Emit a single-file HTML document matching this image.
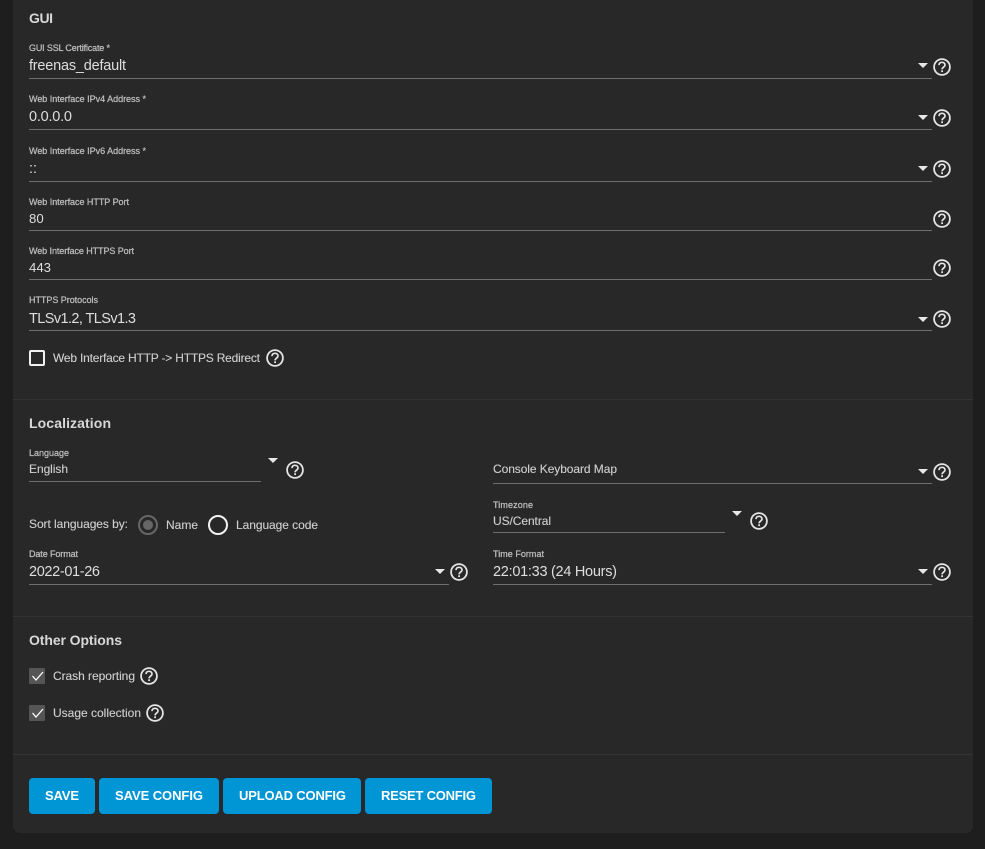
<!DOCTYPE html>
<html><head><meta charset="utf-8"><style>
html,body{margin:0;padding:0;background:#1e1e1e;width:985px;height:849px;overflow:hidden}
svg{display:block}
text{font-family:"Liberation Sans",sans-serif}
.l{font-size:9px;fill:#bdbdbd;stroke:#bdbdbd;stroke-width:.25}
.v{font-size:14.5px;fill:#dedede}
.n{font-size:13.2px;fill:#dedede}
.s{font-size:12px;fill:#cfcfcf;stroke:#cfcfcf;stroke-width:.12}
.t{font-size:14px;font-weight:bold;fill:#d8d8d8}
.b{font-size:13px;font-weight:bold;fill:#fff}
.ln{stroke:#6f6f6f;stroke-width:1}
.dv{stroke:#333;stroke-width:1}
.btn{fill:#0095d5}
</style></head><body>
<svg width="985" height="849" viewBox="0 0 985 849" xmlns="http://www.w3.org/2000/svg">
<defs>
<g id="h"><circle cx="0" cy="0" r="7.9" fill="none" stroke="#e4e4e4" stroke-width="1.8"/><path d="M-3-1.9C-3-3.7-1.7-4.7 0-4.7S3-3.7 3-2C3 0 .1 .1 .1 2.4" fill="none" stroke="#e4e4e4" stroke-width="1.7"/><rect x="-.8" y="3.3" width="1.8" height="1.8" fill="#e4e4e4"/></g>
<path id="c" d="M0 0h10l-5 5z" fill="#e8e8e8"/>
<path id="k" d="M3.5 8l3.5 4 7-8" fill="none" stroke="#fff" stroke-width="1.3"/>
</defs>
<rect x="13" y="-20" width="960" height="853" rx="7" fill="#282828"/>

<text class="t" x="29" y="23" textLength="24" lengthAdjust="spacing">GUI</text>

<text class="l" x="29" y="51" textLength="81" lengthAdjust="spacing">GUI SSL Certificate *</text>
<text class="v" x="29" y="70" textLength="97" lengthAdjust="spacing">freenas_default</text>
<line class="ln" x1="29" x2="932" y1="78.5" y2="78.5"/>
<use href="#c" x="918" y="63"/><use href="#h" x="942" y="67"/>

<text class="l" x="29" y="102" textLength="117" lengthAdjust="spacing">Web Interface IPv4 Address *</text>
<text class="v" x="29" y="121" textLength="43" lengthAdjust="spacing">0.0.0.0</text>
<line class="ln" x1="29" x2="932" y1="129.5" y2="129.5"/>
<use href="#c" x="918" y="115"/><use href="#h" x="942" y="118"/>

<text class="l" x="29" y="154" textLength="117" lengthAdjust="spacing">Web Interface IPv6 Address *</text>
<text class="v" x="29" y="173">::</text>
<line class="ln" x1="29" x2="932" y1="181.5" y2="181.5"/>
<use href="#c" x="918" y="166"/><use href="#h" x="942" y="169"/>

<text class="l" x="29" y="205" textLength="100" lengthAdjust="spacing">Web Interface HTTP Port</text>
<text class="n" x="29" y="223">80</text>
<line class="ln" x1="29" x2="932" y1="230.5" y2="230.5"/>
<use href="#h" x="942" y="219"/>

<text class="l" x="29" y="254" textLength="105" lengthAdjust="spacing">Web Interface HTTPS Port</text>
<text class="n" x="29" y="272">443</text>
<line class="ln" x1="29" x2="932" y1="279.5" y2="279.5"/>
<use href="#h" x="942" y="268"/>

<text class="l" x="29" y="303" textLength="69" lengthAdjust="spacing">HTTPS Protocols</text>
<text class="v" x="29" y="323" textLength="107" lengthAdjust="spacing">TLSv1.2, TLSv1.3</text>
<line class="ln" x1="29" x2="932" y1="330.5" y2="330.5"/>
<use href="#c" x="918" y="317"/><use href="#h" x="942" y="319"/>

<rect x="30" y="351" width="14" height="14" rx="1" fill="none" stroke="#f2f2f2" stroke-width="2"/>
<text class="s" x="53" y="362" textLength="207" lengthAdjust="spacing">Web Interface HTTP -&gt; HTTPS Redirect</text>
<use href="#h" x="275" y="358"/>

<line class="dv" x1="13" x2="973" y1="399.5" y2="399.5"/>

<text class="t" x="29" y="428" textLength="82" lengthAdjust="spacing">Localization</text>

<text class="l" x="29" y="456" textLength="40" lengthAdjust="spacing">Language</text>
<text class="s" x="29" y="473" textLength="39" lengthAdjust="spacing">English</text>
<line class="ln" x1="29" x2="261" y1="481.5" y2="481.5"/>
<use href="#c" x="268" y="458"/><use href="#h" x="295" y="470"/>

<text class="s" x="29" y="528" textLength="99" lengthAdjust="spacing">Sort languages by:</text>
<circle cx="148" cy="525" r="9" fill="none" stroke="#666" stroke-width="2"/>
<circle cx="148" cy="525" r="5" fill="#666"/>
<text class="s" x="166" y="529" textLength="32" lengthAdjust="spacing">Name</text>
<circle cx="218" cy="525" r="9" fill="none" stroke="#f2f2f2" stroke-width="2"/>
<text class="s" x="236" y="529" textLength="82" lengthAdjust="spacing">Language code</text>

<text class="s" x="493" y="473" textLength="124" lengthAdjust="spacing">Console Keyboard Map</text>
<line class="ln" x1="493" x2="932" y1="483.5" y2="483.5"/>
<use href="#c" x="918" y="469"/><use href="#h" x="942" y="472"/>

<text class="l" x="493" y="508" textLength="40" lengthAdjust="spacing">Timezone</text>
<text class="s" x="493" y="525" textLength="58" lengthAdjust="spacing">US/Central</text>
<line class="ln" x1="493" x2="725" y1="532.5" y2="532.5"/>
<use href="#c" x="732" y="511"/><use href="#h" x="759" y="521"/>

<text class="l" x="29" y="557" textLength="49" lengthAdjust="spacing">Date Format</text>
<text class="v" x="29" y="576" textLength="71" lengthAdjust="spacing">2022-01-26</text>
<line class="ln" x1="29" x2="449" y1="584.5" y2="584.5"/>
<use href="#c" x="435" y="569"/><use href="#h" x="459" y="572"/>

<text class="l" x="493" y="557" textLength="51" lengthAdjust="spacing">Time Format</text>
<text class="v" x="493" y="576" textLength="124" lengthAdjust="spacing">22:01:33 (24 Hours)</text>
<line class="ln" x1="493" x2="932" y1="584.5" y2="584.5"/>
<use href="#c" x="918" y="569"/><use href="#h" x="942" y="572"/>

<line class="dv" x1="13" x2="973" y1="616.5" y2="616.5"/>

<text class="t" x="29" y="645" textLength="93" lengthAdjust="spacing">Other Options</text>

<rect x="29" y="668" width="16" height="16" rx="1" fill="#555"/>
<use href="#k" x="29" y="668"/>
<text class="s" x="53" y="680" textLength="82" lengthAdjust="spacing">Crash reporting</text>
<use href="#h" x="149" y="676"/>

<rect x="29" y="705" width="16" height="16" rx="1" fill="#555"/>
<use href="#k" x="29" y="705"/>
<text class="s" x="53" y="717" textLength="88" lengthAdjust="spacing">Usage collection</text>
<use href="#h" x="155" y="713"/>

<line class="dv" x1="13" x2="973" y1="754.5" y2="754.5"/>

<rect class="btn" x="29" y="778" width="66" height="36" rx="4"/>
<text class="b" x="45" y="800" textLength="34" lengthAdjust="spacing">SAVE</text>
<rect class="btn" x="99" y="778" width="120" height="36" rx="4"/>
<text class="b" x="115" y="800" textLength="88" lengthAdjust="spacing">SAVE CONFIG</text>
<rect class="btn" x="223" y="778" width="138" height="36" rx="4"/>
<text class="b" x="239" y="800" textLength="107" lengthAdjust="spacing">UPLOAD CONFIG</text>
<rect class="btn" x="365" y="778" width="127" height="36" rx="4"/>
<text class="b" x="381" y="800" textLength="95" lengthAdjust="spacing">RESET CONFIG</text>
</svg>
</body></html>
